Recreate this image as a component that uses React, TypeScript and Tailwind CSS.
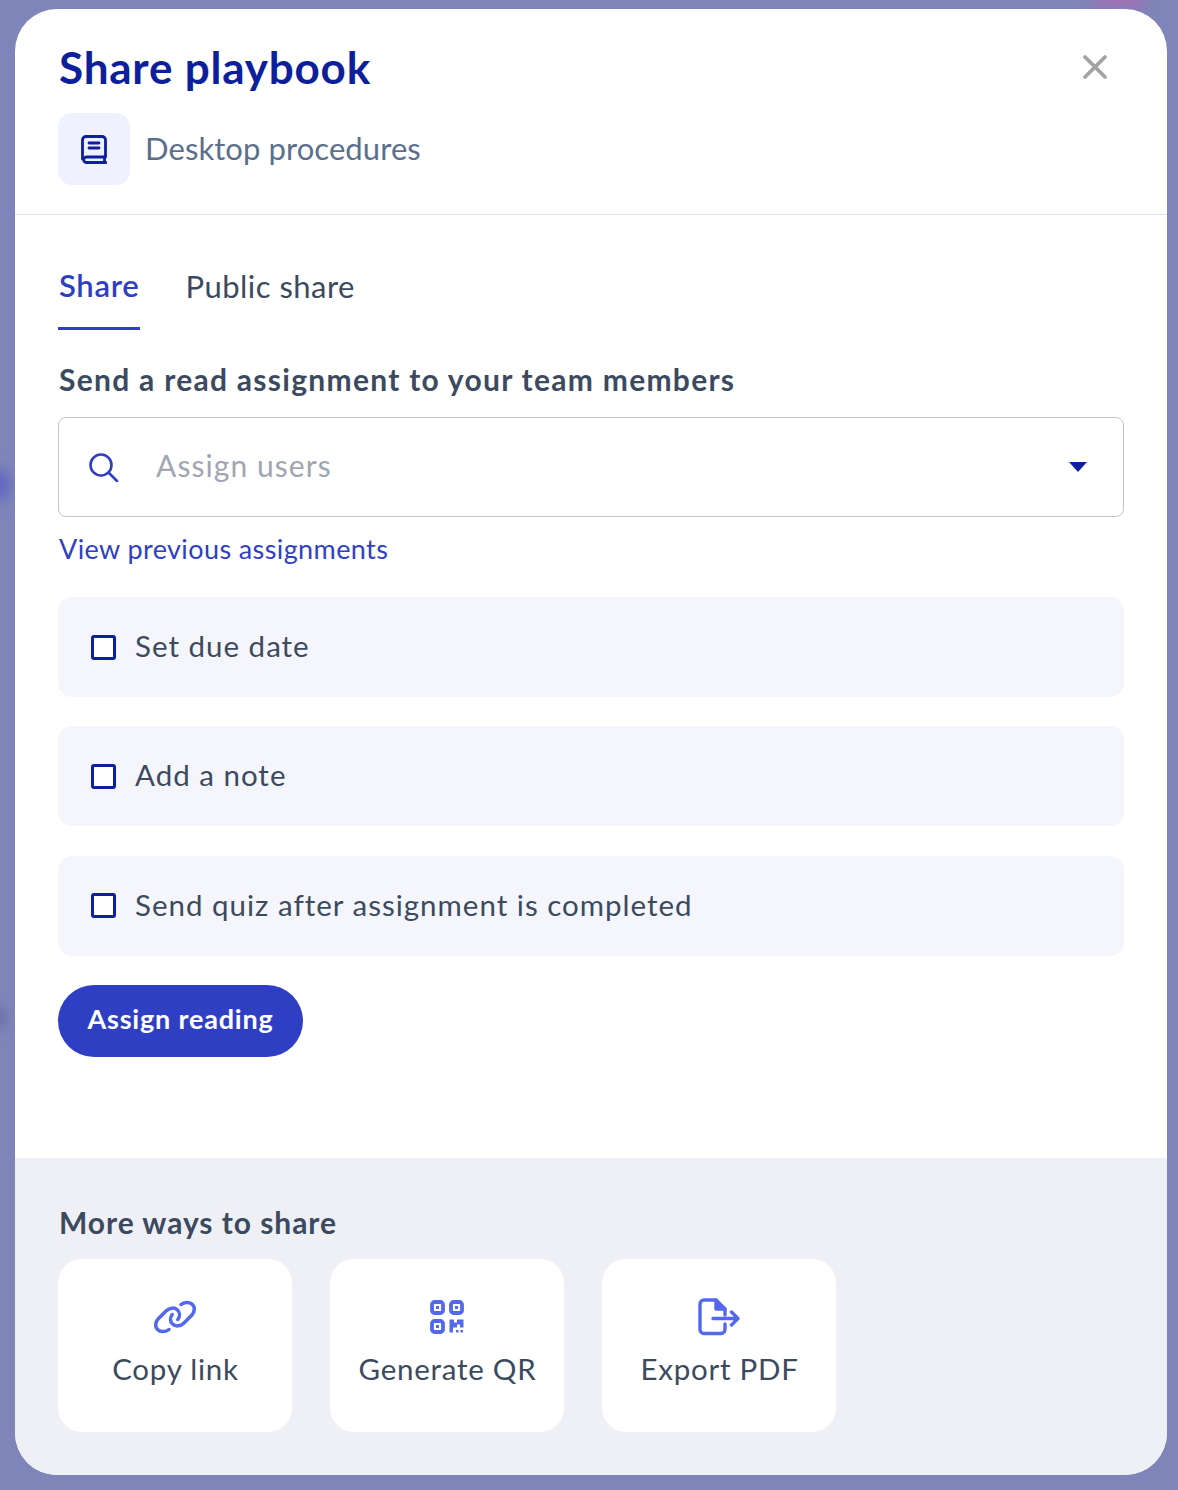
import React from 'react';
import { X } from 'lucide-react';

const font = "font-['Lato','Noto_Sans',sans-serif]";

const BookIcon = () => (
  <svg width="26" height="29" viewBox="0 0 26 29" fill="none" stroke="#0e1f9b" strokeWidth="2.8" strokeLinejoin="round" strokeLinecap="round">
    <path d="M1.500 24V5A3.500 3.500 0 0 1 5 1.500h16A3.500 3.500 0 0 1 24.500 5V22H5a2.800 2.800 0 0 0 0 5.500h20" />
    <path d="M8 8h10M8 13h10" />
    <path d="M23.500 22v5" />
  </svg>
);

const SearchIcon = () => (
  <svg width="30" height="30" viewBox="0 0 30 30" fill="none" stroke="#2f3fc4" strokeWidth="2.6" strokeLinecap="round">
    <circle cx="12" cy="13" r="10.500" />
    <path d="M20 21L28 29" />
  </svg>
);

const LinkIcon = () => (
  <svg width="44" height="34" viewBox="0 0 44 34" fill="none" stroke="#5468ec" strokeWidth="3.500" strokeLinecap="round">
    <path d="M16 29.500c-3 2.600-8 2.800-11 .3-3.300-2.800-3-7.500.3-11L13 11c3.500-3.500 8.500-3.800 11.500-1 2.700 2.600 2.500 6.600.3 9.500" />
    <path d="M28 4.500c3-2.600 8-2.800 11-.3 3.300 2.800 3 7.500-.3 11L31 23c-3.500 3.500-8.500 3.800-11.500 1-2.700-2.600-2.500-6.600-.3-9.500" />
  </svg>
);

const QrIcon = () => (
  <svg width="34" height="34" viewBox="0 0 34 34" fill="none">
    <g stroke="#5468ec" strokeWidth="3.800">
      <rect x="2" y="2" width="11" height="11" rx="2.500" />
      <rect x="21" y="2" width="11" height="11" rx="2.500" />
      <rect x="2" y="21" width="11" height="11" rx="2.500" />
    </g>
    <g fill="#5468ec">
      <rect x="6" y="6" width="3" height="3" />
      <rect x="25" y="6" width="3" height="3" />
      <rect x="6" y="25" width="3" height="3" />
      <path d="M19.500 19.500h4.500v3h3v-3h6.500v8h-3.500v-3h-3v3H23v5h-3.500z" />
      <rect x="26" y="30" width="2.500" height="2.500" />
      <rect x="30.500" y="30" width="2.500" height="2.500" />
    </g>
  </svg>
);

const ExportIcon = () => (
  <svg width="42" height="38" viewBox="0 0 42 38" fill="none" stroke="#5468ec" strokeWidth="3.400" strokeLinecap="round" strokeLinejoin="round">
    <path d="M27 26v5.500a4 4 0 0 1-4 4H6a4 4 0 0 1-4-4V6a4 4 0 0 1 4-4h12l9 9v6" />
    <path d="M18 2v9h9" fill="#5468ec" />
    <path d="M15 20.500h25M33.500 14l6.500 6.500-6.500 6.500" />
  </svg>
);

const OptionRow = ({ label }: { label: string }) => (
  <label className="flex h-[100px] items-center gap-[19px] rounded-[14px] bg-[#f5f6fb] pl-[33px]">
    <span className="h-[25px] w-[25px] rounded-[3px] border-[3px] border-[#0e1f9b] bg-white" />
    <span className="pb-[2px] text-[29.5px] tracking-[1px] text-[#3c4a60]">{label}</span>
  </label>
);

const ShareCard = ({ label, icon }: { label: string; icon: React.ReactNode }) => (
  <button className="flex h-[173px] w-[234px] flex-col items-center rounded-[24px] bg-white">
    <span className="mt-[33px] flex h-[50px] items-center justify-center">{icon}</span>
    <span className="mt-[5px] pl-px text-[29.5px] tracking-[0.75px] text-[#3c4a60]">{label}</span>
  </button>
);

export default function App() {
  return (
    <div className={`relative h-[1490px] w-[1178px] overflow-hidden bg-[#7f85b9] pt-[9px] pl-[15px] ${font}`}>
      <div className="absolute -left-[8px] top-[470px] h-[30px] w-[16px] rounded-full bg-[#5a60c4] blur-[7px]" />
      <div className="absolute -left-[8px] top-[1005px] h-[24px] w-[14px] rounded-full bg-[#6a6fa8] blur-[6px]" />
      <div className="absolute left-[1095px] -top-[8px] h-[16px] w-[50px] rounded-full bg-[#a06fb5] blur-[6px]" />

      <div className="relative flex h-[1466px] w-[1152px] flex-col overflow-hidden rounded-[42px] bg-white">
        <header className="relative h-[206px] border-b border-[#dde4f0] pl-[43px]">
          <h1 className="pt-[29px] pl-px text-[44px] leading-[58px] font-bold tracking-[0.8px] text-[#0e1f9b]">Share playbook</h1>
          <div className="mt-[17px] flex items-center gap-[15px]">
            <span className="flex h-[72px] w-[72px] items-center justify-center rounded-[14px] bg-[#eff1fe]">
              <BookIcon />
            </span>
            <span className="pb-[2px] text-[31px] tracking-[0.08px] text-[#5b6f8c]">Desktop procedures</span>
          </div>
          <button className="absolute right-[52px] top-[38px] text-[#a3a3a3]">
            <X size={40} strokeWidth={2.3} />
          </button>
        </header>

        <main className="flex-1 px-[43px]">
          <nav className="flex h-[115px] gap-[46px] text-[31px]">
            <span className="flex h-[115px] items-center border-b-[3px] border-[#2f3fc4] pt-[28px] pl-px font-semibold tracking-[0.7px] text-[#2f3fc4]">Share</span>
            <span className="flex h-[115px] items-center pt-[28px] tracking-[0.47px] text-[#3c4a60]">Public share</span>
          </nav>

          <h2 className="mt-[29px] pl-px text-[30px] leading-[40px] font-bold tracking-[1.28px] text-[#3c4a60]">Send a read assignment to your team members</h2>

          <div className="mt-[18px] flex h-[100px] items-center rounded-[8px] border border-[#c4c4c4] pr-[36px] pl-[30px]">
            <SearchIcon />
            <span className="ml-[37px] flex-1 pb-[3px] text-[30px] tracking-[1.07px] text-[#a0a6b2]">Assign users</span>
            <span className="h-0 w-0 border-x-[9px] border-t-[10px] border-x-transparent border-t-[#0e1f9b]" />
          </div>

          <a className="mt-[14px] block text-[27px] leading-[36px] tracking-[0.4px] pl-px text-[#2f3fc4]">View previous assignments</a>

          <div className="mt-[30px] flex flex-col gap-[29.4px]">
            <OptionRow label="Set due date" />
            <OptionRow label="Add a note" />
            <OptionRow label="Send quiz after assignment is completed" />
          </div>

          <button className="mt-[29px] h-[72px] w-[245px] rounded-full bg-[#2f3fc4] pb-[3px] text-[27px] font-bold tracking-[0.8px] text-white">Assign reading</button>
        </main>

        <footer className="h-[317px] bg-[#eff0f5] px-[43px] pt-[43px]">
          <h2 className="pl-px text-[30px] leading-[42px] font-bold tracking-[0.95px] text-[#3c4a60]">More ways to share</h2>
          <div className="mt-[16px] flex gap-[38px]">
            <ShareCard label="Copy link" icon={<LinkIcon />} />
            <ShareCard label="Generate QR" icon={<QrIcon />} />
            <ShareCard label="Export PDF" icon={<ExportIcon />} />
          </div>
        </footer>
      </div>
    </div>
  );
}
